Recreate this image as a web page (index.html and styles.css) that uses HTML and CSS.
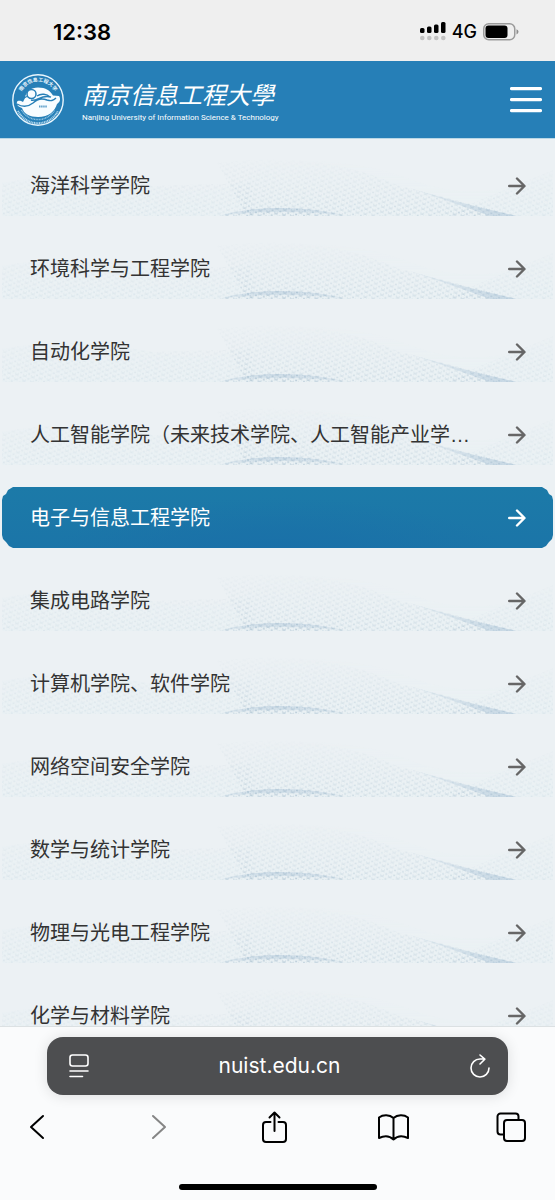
FILE: index.html
```html
<!DOCTYPE html>
<html lang="zh-CN">
<head>
<meta charset="utf-8">
<meta name="viewport" content="width=device-width, initial-scale=1">
<title>南京信息工程大学</title>
<link rel="stylesheet" href="styles.css">
</head>
<body>
<div class="status">
  <time class="clock">12:38</time>
  <div class="status-right">
    <svg width="26" height="19" viewBox="0 0 26 19" aria-hidden="true">
      <g><rect x="0" y="6" width="4.500" height="5" rx="1.5"/><rect x="7" y="4.500" width="4.500" height="6.500" rx="1.5"/><rect x="14" y="2.500" width="4.500" height="8.500" rx="1.5"/><rect x="21" y="0" width="4.500" height="11" rx="1.5"/></g>
      <g fill="#c2c2c2"><circle cx="2.300" cy="16" r="2.300"/><circle cx="9.300" cy="16" r="2.300"/><circle cx="16.300" cy="16" r="2.300"/><circle cx="23.300" cy="16" r="2.300"/></g>
    </svg>
    <span class="network">4G</span>
    <svg width="36" height="18" viewBox="0 0 36 18" aria-hidden="true">
      <rect x=".75" y=".75" width="31" height="16" rx="5" fill="none" stroke="#9b9b9b" stroke-width="1.5"/>
      <rect x="2.500" y="2.500" width="22" height="12.500" rx="3"/>
      <path d="M33.500 6.200q2 .8 2 2.600t-2 2.600z" fill="#8d8d8d"/>
    </svg>
  </div>
</div>

<header class="site-header">
  <a class="brand" href="#">
    <svg class="emblem" viewBox="0 0 52 52" aria-hidden="true">
      <defs><path id="arc" d="M7.500 26a18.500 18.500 0 0 1 37 0"/></defs>
      <circle cx="26" cy="26" r="25.200" fill="none" stroke="#e9f6fd" stroke-width="1.4"/>
      <text class="emblem-text"><textPath href="#arc" startOffset="50%" text-anchor="middle">南京信息工程大学</textPath></text>
      <path d="M13 24c1-7 6-10.500 13-10.500 8 0 12 3 15 8l6 .5c2 3 1 6-2 8-2 7-8 13-19 13-8 0-14-3-16-9-3-1-6-3-5-6 1-2 4-1 6 0z" fill="#f7fcff"/>
      <path d="M5 30c5 3 11 3 16-1 4-4 9-5 14-3 4 1 6 1 9-2M12 24c3-2 6-2 8 0M25 22c4-3 10-2 13 1M19 26c6 2 10-6 20-3" fill="none" stroke="#267fb7" stroke-width="1.4"/>
      <circle cx="19.500" cy="20" r="4.500" fill="#f7fcff" stroke="#267fb7" stroke-width="1.5"/>
      <path d="M27 32.500h8" stroke="#5d9fca" stroke-width="2.200" stroke-dasharray="1.500 .6"/>
      <path d="M6 37a22.500 22.500 0 0 0 40 0" fill="none" stroke="#b3d8ee" stroke-width="2" stroke-dasharray="1.100 .6"/>
      <path d="M9.500 36a19 19 0 0 0 33 0" fill="none" stroke="#8fc3e2" stroke-width="1.500" stroke-dasharray="1 .6"/>
    </svg>
    <span class="brand-names">
      <span class="name-zh">南京信息工程大學</span>
      <span class="name-en">Nanjing University of Information Science &amp; Technology</span>
    </span>
  </a>
  <button class="menu" type="button" aria-label="菜单">
    <svg width="32" height="26" viewBox="0 0 32 26"><path d="M1.500 1.600h29M1.500 12.600h29M1.500 23.600h29" stroke="#fff" stroke-width="3.200" stroke-linecap="round"/></svg>
  </button>
</header>

<svg class="sprite" aria-hidden="true">
  <symbol id="arrow" viewBox="0 0 18 18"><path d="M1.200 9h15M9 1.500 16.500 9 9 16.500" fill="none" stroke="currentColor" stroke-width="2.400" stroke-linecap="round" stroke-linejoin="round"/></symbol>
</svg>

<main class="content">
  <nav class="colleges" aria-label="学院">
    <a class="college" href="#"><span class="label">海洋科学学院</span><svg class="arrow"><use href="#arrow"/></svg></a>
    <a class="college" href="#"><span class="label">环境科学与工程学院</span><svg class="arrow"><use href="#arrow"/></svg></a>
    <a class="college" href="#"><span class="label">自动化学院</span><svg class="arrow"><use href="#arrow"/></svg></a>
    <a class="college" href="#"><span class="label">人工智能学院（未来技术学院、人工智能产业学…</span><svg class="arrow"><use href="#arrow"/></svg></a>
    <a class="college active" href="#" aria-current="true"><span class="label">电子与信息工程学院</span><svg class="arrow"><use href="#arrow"/></svg></a>
    <a class="college" href="#"><span class="label">集成电路学院</span><svg class="arrow"><use href="#arrow"/></svg></a>
    <a class="college" href="#"><span class="label">计算机学院、软件学院</span><svg class="arrow"><use href="#arrow"/></svg></a>
    <a class="college" href="#"><span class="label">网络空间安全学院</span><svg class="arrow"><use href="#arrow"/></svg></a>
    <a class="college" href="#"><span class="label">数学与统计学院</span><svg class="arrow"><use href="#arrow"/></svg></a>
    <a class="college" href="#"><span class="label">物理与光电工程学院</span><svg class="arrow"><use href="#arrow"/></svg></a>
    <a class="college" href="#"><span class="label">化学与材料学院</span><svg class="arrow"><use href="#arrow"/></svg></a>
  </nav>
</main>

<footer class="browser-bar">
  <div class="address">
    <button type="button" aria-label="页面设置">
      <svg width="20" height="24" viewBox="0 0 20 24"><g fill="none" stroke="#fff" stroke-width="1.600" stroke-linecap="round"><rect x="1" y="1" width="18" height="11" rx="2.500"/><path d="M1 17h18M1 22.500h12.500"/></g></svg>
    </button>
    <button class="url" type="button">nuist.edu.cn</button>
    <button type="button" aria-label="重新载入">
      <svg width="20" height="24" viewBox="0 0 20 24"><path d="M19 14A9 9 0 1 1 10 5h4.500M10 1l4.800 4.200-4.800 4.800" fill="none" stroke="#fff" stroke-width="1.600" stroke-linecap="round" stroke-linejoin="round"/></svg>
    </button>
  </div>
  <div class="tools">
    <button type="button" aria-label="后退"><svg viewBox="0 0 32 32"><path d="M22 5 10 16l12 11"/></svg></button>
    <button type="button" aria-label="前进" disabled><svg viewBox="0 0 32 32"><path d="M13 5l12 11-12 11"/></svg></button>
    <button type="button" aria-label="分享"><svg viewBox="0 0 32 32"><path d="M12.500 11H8a3 3 0 0 0-3 3v14a3 3 0 0 0 3 3h17a3 3 0 0 0 3-3V14a3 3 0 0 0-3-3h-4.500M16.500 20V1.500M11.500 6.500l5-5 5 5"/></svg></button>
    <button type="button" aria-label="书签"><svg viewBox="0 0 32 32"><path d="M16.500 28.500V7C12.500 3.500 6 3.500 2 6.500v20.500c5-2.500 10.500-2.500 14.500 1.500 4-4 9.500-4 14.500-1.500V6.500c-4-3-10.500-3-14.500.5"/></svg></button>
    <button type="button" aria-label="标签页"><svg viewBox="0 0 32 32"><rect x="9" y="9" width="21" height="21" rx="3"/><path d="M9 23.500H5.500a3 3 0 0 1-3-3v-15a3 3 0 0 1 3-3h15a3 3 0 0 1 3 3V9"/></svg></button>
  </div>
  <div class="home-indicator"></div>
</footer>
</body>
</html>
```
FILE: styles.css
```css
* { box-sizing: border-box; }

body {
  margin: 0;
  height: 100vh;
  display: flex;
  flex-direction: column;
  background: #ecf1f4;
  font-family: "Liberation Sans", "Noto Sans CJK SC", sans-serif;
}

button {
  margin: 0;
  padding: 0;
  border: 0;
  background: none;
  color: inherit;
  font: inherit;
}

svg { display: block; flex: none; }
a { color: inherit; text-decoration: none; }
.sprite { display: none; }

.status {
  flex: none;
  height: 61px;
  padding: 0 36px 0 53px;
  display: flex;
  align-items: center;
  justify-content: space-between;
  background: #efefef;
  color: #000;
}
.clock { font: 600 22px/28px Inter, sans-serif; padding-top: 2px; }
.status-right { display: flex; align-items: center; gap: 6px; padding-top: 2px; }
.network { font: 500 18px/24px Inter, sans-serif; }

.site-header {
  flex: none;
  height: 78px;
  padding: 0 13px 0 12px;
  display: flex;
  align-items: center;
  justify-content: space-between;
  background: #267fb7;
  border-bottom: 1px solid #b9d7e6;
  color: #fff;
}
.brand { display: flex; align-items: center; gap: 18px; }
.emblem { width: 52px; height: 52px; }
.emblem-text { font: 700 5px "Noto Sans CJK SC", sans-serif; fill: #e9f6fd; }
.brand-names { display: flex; flex-direction: column; padding-top: 2px; }
.name-zh { font: italic 400 24px/34px "Noto Sans CJK SC", sans-serif; }
.name-en { font: 400 8px/14px Roboto, sans-serif; white-space: nowrap; }

.content { flex: 1; min-height: 0; overflow: hidden; }
.colleges { display: flex; flex-direction: column; gap: 22px; padding: 16px 2px; }
.college {
  flex: none;
  height: 61px;
  padding: 0 27px 0 28px;
  display: flex;
  align-items: center;
  justify-content: space-between;
  gap: 16px;
  color: #333;
  font-size: 20px;
  line-height: 30px;
  background: url("data:image/svg+xml,%3Csvg xmlns='http://www.w3.org/2000/svg' viewBox='0 0 551 61' preserveAspectRatio='none'%3E%3Cdefs%3E%3Cpattern id='p' width='8' height='5' patternUnits='userSpaceOnUse' patternTransform='rotate(10)'%3E%3Cpath d='M0 0L8 5M8 0L0 5' stroke='%237f9fb8' stroke-width='.8' stroke-dasharray='2 1.5'/%3E%3C/pattern%3E%3ClinearGradient id='g' x2='0' y2='1'%3E%3Cstop stop-color='%23fff' stop-opacity='0'/%3E%3Cstop offset='1' stop-color='%23fff'/%3E%3C/linearGradient%3E%3Cmask id='m'%3E%3Crect width='551' height='61' fill='url(%23g)'/%3E%3C/mask%3E%3ClinearGradient id='h' x2='0' y2='1'%3E%3Cstop stop-color='%239bb8d0' stop-opacity='.4'/%3E%3Cstop offset='1' stop-color='%239bb8d0' stop-opacity='.08'/%3E%3C/linearGradient%3E%3ClinearGradient id='k'%3E%3Cstop stop-color='%239bb8d0' stop-opacity='0'/%3E%3Cstop offset='1' stop-color='%239bb8d0' stop-opacity='.45'/%3E%3C/linearGradient%3E%3C/defs%3E%3Cg mask='url(%23m)'%3E%3Cpath d='M0 28Q70 15 150 31T260 10Q340 -2 410 25T551 16V61H0z' fill='%23e8f3f6' opacity='.4'/%3E%3Cpath d='M0 28Q70 15 150 31L250 28V61H0z' fill='url(%23p)' opacity='.2'/%3E%3Cpath d='M215 8Q320 -5 395 30L515 61H245z' fill='url(%23p)' opacity='.35'/%3E%3Cpath d='M440 61L551 15V61z' fill='url(%23p)' opacity='.2'/%3E%3C/g%3E%3Cpath d='M216 61Q245 53 278 53Q315 53 345 61Q280 53 216 61z' fill='url(%23h)'/%3E%3Cpath d='M216 61Q245 53 278 53Q315 53 345 61z' fill='url(%23p)' opacity='.3'/%3E%3Cpath d='M380 24Q435 43 515 61H488Q430 40 380 24z' fill='url(%23k)'/%3E%3C/svg%3E") center / 100% 100% no-repeat;
}
.label { min-width: 0; overflow: hidden; white-space: nowrap; text-overflow: ellipsis; }
.arrow { width: 18px; height: 18px; color: #666; }

.college.active {
  color: #fff;
  background:
    radial-gradient(ellipse at 50% 120%, #1a6fa8 0, #1a6fa800 60%),
    linear-gradient(#1c7aa8, #1b75a8);
  clip-path: polygon(
    0 13px, 1px 9px, 4px 7px, 6px 3px, 11px 0,
    calc(100% - 11px) 0, calc(100% - 6px) 3px, calc(100% - 4px) 7px, calc(100% - 1px) 9px, 100% 13px,
    100% calc(100% - 13px), calc(100% - 1px) calc(100% - 9px), calc(100% - 4px) calc(100% - 6px), calc(100% - 7px) calc(100% - 2px), calc(100% - 11px) 100%,
    11px 100%, 7px calc(100% - 2px), 4px calc(100% - 6px), 1px calc(100% - 9px), 0 calc(100% - 13px));
}
.active .arrow { color: #fff; }

.browser-bar {
  flex: none;
  height: 174px;
  padding: 10px 0;
  display: flex;
  flex-direction: column;
  border-top: 1px solid #dce1e3;
  background: #fafbfc;
}
.address {
  height: 58px;
  margin: 0 47px;
  padding: 0 18px 0 22px;
  display: flex;
  align-items: center;
  justify-content: space-between;
  border-radius: 16px;
  background: #4d4e50;
  box-shadow: 0 1px 14px #0000001f;
  color: #fff;
}
.url { font: 400 21px/30px Inter, sans-serif; }
.tools {
  margin-top: 16px;
  padding: 0 28px 0 21px;
  display: flex;
  justify-content: space-between;
}
.tools svg {
  width: 32px;
  height: 32px;
  fill: none;
  stroke: #000;
  stroke-width: 2;
  stroke-linecap: round;
  stroke-linejoin: round;
}
.tools button:disabled svg { stroke: #858585; }
.home-indicator {
  width: 198px;
  height: 6px;
  margin: auto auto 0;
  border-radius: 3px;
  background: #000;
}
```
